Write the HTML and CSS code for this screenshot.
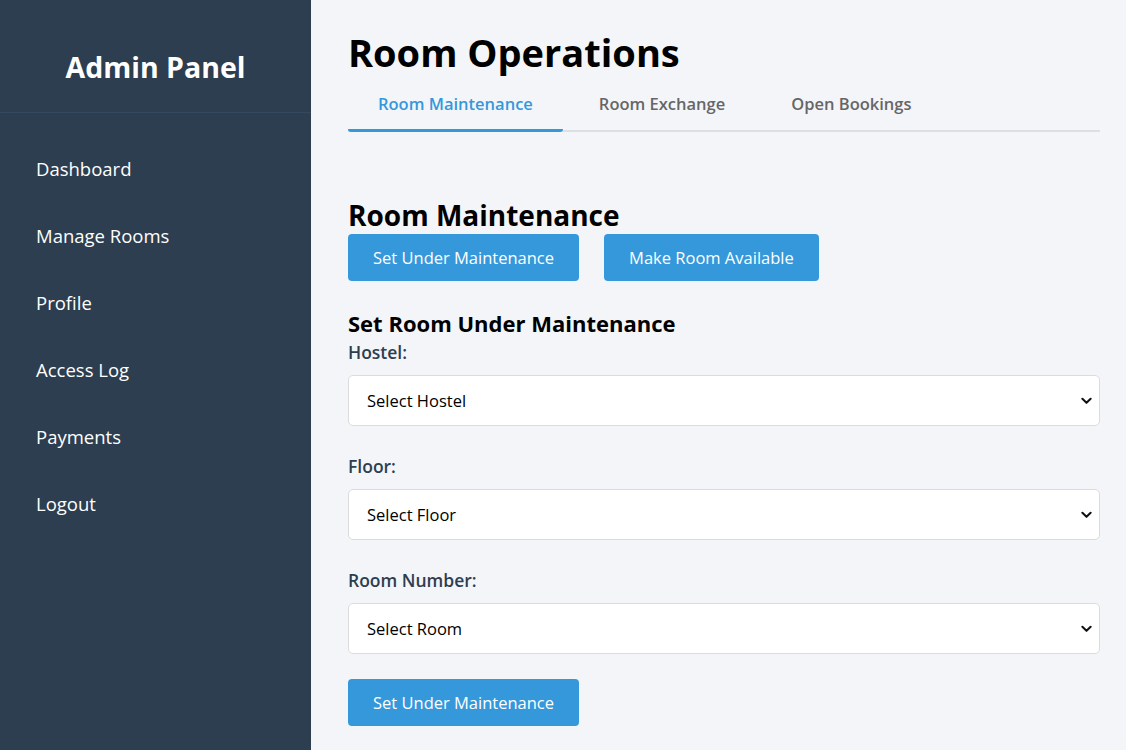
FILE: index.html
```html
<!DOCTYPE html>
<html lang="en">
<head>
<meta charset="utf-8">
<title>Room Operations</title>
<link rel="stylesheet" href="styles.css">
</head>
<body>
<aside class="sidebar">
  <div class="brand"><h2>Admin Panel</h2></div>
  <nav class="nav">
    <a href="#">Dashboard</a>
    <a href="#">Manage Rooms</a>
    <a href="#">Profile</a>
    <a href="#">Access Log</a>
    <a href="#">Payments</a>
    <a href="#">Logout</a>
  </nav>
</aside>
<main class="main">
  <h1 class="title">Room Operations</h1>
  <div class="tabs">
    <button class="tab active">Room Maintenance</button>
    <button class="tab">Room Exchange</button>
    <button class="tab">Open Bookings</button>
  </div>
  <section class="panel">
    <h2 class="section-title">Room Maintenance</h2>
    <div class="actions">
      <button class="btn">Set Under Maintenance</button>
      <button class="btn">Make Room Available</button>
    </div>
    <h3 class="form-title">Set Room Under Maintenance</h3>
    <form class="form">
      <label class="label">Hostel:</label>
      <div class="select-wrap">
        <select class="select"><option>Select Hostel</option></select>
        <svg class="chev" viewBox="0 0 12 8" width="11" height="8"><path d="M1.5 1.5 L6 6 L10.5 1.5" fill="none" stroke="#111" stroke-width="2.2" stroke-linecap="round" stroke-linejoin="round"/></svg>
      </div>
      <label class="label">Floor:</label>
      <div class="select-wrap">
        <select class="select"><option>Select Floor</option></select>
        <svg class="chev" viewBox="0 0 12 8" width="11" height="8"><path d="M1.5 1.5 L6 6 L10.5 1.5" fill="none" stroke="#111" stroke-width="2.2" stroke-linecap="round" stroke-linejoin="round"/></svg>
      </div>
      <label class="label">Room Number:</label>
      <div class="select-wrap">
        <select class="select"><option>Select Room</option></select>
        <svg class="chev" viewBox="0 0 12 8" width="11" height="8"><path d="M1.5 1.5 L6 6 L10.5 1.5" fill="none" stroke="#111" stroke-width="2.2" stroke-linecap="round" stroke-linejoin="round"/></svg>
      </div>
      <div class="submit-row"><button type="button" class="btn">Set Under Maintenance</button></div>
    </form>
  </section>
</main>
</body>
</html>
```
FILE: styles.css
```css
* { box-sizing: border-box; }
html, body { margin: 0; padding: 0; }
body {
  display: flex;
  height: 100vh;
  overflow: hidden;
  font-family: "Open Sans", "Noto Sans", sans-serif;
  background: #f4f5f9;
  color: #000;
}
.sidebar {
  width: 311px;
  flex-shrink: 0;
  background: #2c3e50;
  color: #fff;
}
.brand {
  height: 113px;
  display: flex;
  align-items: center;
  justify-content: center;
  border-bottom: 1px solid #34495e;
  padding-top: 22px;
}
.brand h2 {
  margin: 0;
  font-size: 28.5px;
  font-weight: 700;
}
.nav {
  display: flex;
  flex-direction: column;
  padding: 42px 0 0 36px;
  gap: 40px;
}
.nav a {
  color: #fff;
  text-decoration: none;
  font-size: 18.5px;
  line-height: 27px;
}
.main {
  flex: 1;
  padding: 26px 26px 0 37px;
}
.title {
  margin: 0;
  font-size: 38px;
  font-weight: 700;
  line-height: 52px;
}
.tabs {
  display: flex;
  gap: 6px;
  border-bottom: 2px solid #dcdfe3;
  margin-top: 1px;
}
.tab {
  background: none;
  border: none;
  font-family: inherit;
  font-size: 16.5px;
  font-weight: 600;
  color: #666;
  padding: 13px 30px 14px;
  margin-bottom: -2px;
  border-bottom: 3px solid transparent;
  border-radius: 0 0 3px 3px;
  cursor: pointer;
}
.tab.active {
  color: #3498db;
  border-bottom-color: #3498db;
}
.panel { padding-top: 65px; }
.section-title {
  margin: 0;
  font-size: 28px;
  font-weight: 700;
  line-height: 36px;
}
.actions {
  display: flex;
  gap: 25px;
  margin-top: 1px;
}
.btn {
  background: #3498db;
  color: #fff;
  border: none;
  border-radius: 4px;
  height: 47px;
  padding: 0 25px;
  font-family: inherit;
  font-size: 16.5px;
  cursor: pointer;
}
.form-title {
  margin: 27px 0 0;
  font-size: 22px;
  font-weight: 700;
  line-height: 30px;
}
.form { display: flex; flex-direction: column; }
.label {
  font-size: 17.5px;
  font-weight: 600;
  color: #2c3e50;
  line-height: 28px;
  margin-bottom: 9px;
}
.select-wrap {
  position: relative;
  margin-bottom: 26px;
}
.select {
  appearance: none;
  -webkit-appearance: none;
  width: 100%;
  height: 51px;
  border: 1px solid #dcdcdc;
  border-radius: 5px;
  background: #fff;
  padding: 0 18px;
  font-family: "Open Sans", sans-serif;
  font-size: 16.5px;
  color: #000;
}
.chev {
  position: absolute;
  right: 8px;
  top: 22px;
  pointer-events: none;
}
.submit-row { display: flex; margin-top: -1px; }
```
